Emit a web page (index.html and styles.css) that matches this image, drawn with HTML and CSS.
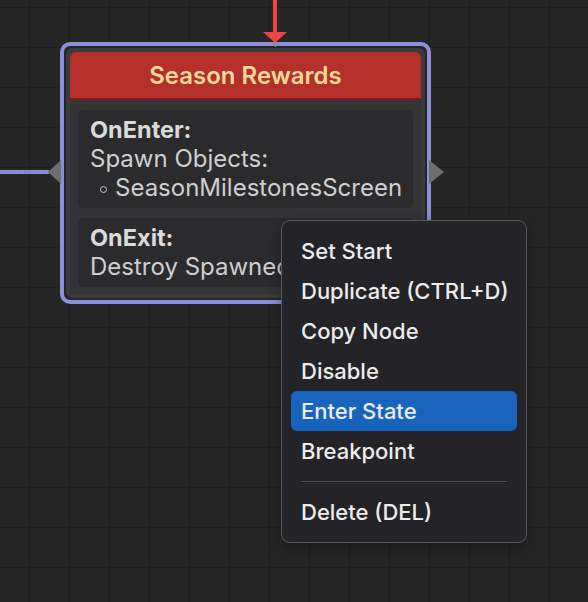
FILE: index.html
```html
<!DOCTYPE html>
<html>
<head>
<meta charset="utf-8">
<link rel="stylesheet" href="styles.css">
</head>
<body>
<div class="canvas">
  <svg class="wires" width="588" height="602" viewBox="0 0 588 602">
    <line x1="0" y1="172" x2="49" y2="172" stroke="#8c8cd4" stroke-width="4"/>
    <line x1="0" y1="172" x2="49" y2="172" stroke="#6c6ca8" stroke-width="1" stroke-dasharray="1 2"/>
    <rect x="273" y="0" width="4" height="33" fill="#ee4444"/>
    <polygon points="263,32 287,32 275,43" fill="#ee4444"/>
  </svg>

  <div class="node">
    <div class="node-frame">
      <div class="node-header">Season Rewards</div>
      <div class="node-body">
        <div class="section">
          <div class="sec-title">OnEnter:</div>
          <div class="sec-line">Spawn Objects:</div>
          <div class="sec-line sec-item"><span class="bullet"></span>SeasonMilestonesScreen</div>
        </div>
        <div class="section">
          <div class="sec-title">OnExit:</div>
          <div class="sec-line">Destroy Spawned Objects</div>
        </div>
      </div>
    </div>
  </div>

  <svg class="ports" width="588" height="602" viewBox="0 0 588 602">
    <polygon points="48,172 61,160 61,184" fill="#6e6e72"/>
    <polygon points="444,172 429,160 429,184" fill="#6e6e72"/>
    <polygon points="270,42 281,42 275.5,47" fill="#8e8e94"/>
  </svg>

  <div class="menu">
    <div class="menu-item">Set Start</div>
    <div class="menu-item">Duplicate (CTRL+D)</div>
    <div class="menu-item">Copy Node</div>
    <div class="menu-item">Disable</div>
    <div class="menu-item active">Enter State</div>
    <div class="menu-item">Breakpoint</div>
    <div class="menu-sep"></div>
    <div class="menu-item">Delete (DEL)</div>
  </div>
</div>
</body>
</html>
```

FILE: styles.css
```css
html, body {
  margin: 0;
  padding: 0;
  background: #262626;
}

.canvas {
  position: relative;
  width: 588px;
  height: 602px;
  overflow: hidden;
  background-color: #262626;
  background-image:
    linear-gradient(to right, #1f1f1f 0, #1f1f1f 1px, transparent 1px),
    linear-gradient(to bottom, #1f1f1f 0, #1f1f1f 1px, transparent 1px);
  background-size: 40px 40px;
  background-position: 29px 7px;
  font-family: Inter, "Noto Sans", sans-serif;
}

.wires, .ports {
  position: absolute;
  left: 0;
  top: 0;
}

.ports {
  z-index: 2;
}

.node {
  position: absolute;
  left: 60px;
  top: 42px;
  width: 371px;
  height: 262px;
  box-sizing: border-box;
  border: 4px solid #8e8ed6;
  border-radius: 10px;
  background: #262628;
  padding: 2px;
  z-index: 1;
}

.node-frame {
  box-sizing: border-box;
  height: 100%;
  background: #3b3b3e;
  border-radius: 7px;
  padding: 4px;
  display: flex;
  flex-direction: column;
}

.node-header {
  height: 46px;
  flex: none;
  background: #b52f2b;
  border-bottom: 2px solid #801a1a;
  border-radius: 6px 6px 0 0;
  color: #f2d89c;
  font-size: 24px;
  font-weight: 600;
  display: flex;
  align-items: center;
  justify-content: center;
}

.node-body {
  flex: 1;
  background: #343437;
  padding: 10px 8px 0 8px;
  display: flex;
  flex-direction: column;
  gap: 10px;
}

.section {
  background: #2b2b2d;
  border-radius: 5px;
  padding: 5px 12px 6px 12px;
  overflow: hidden;
  white-space: nowrap;
}

.sec-title {
  color: #dadada;
  font-size: 23.5px;
  font-weight: 700;
  line-height: 29px;
}

.sec-line {
  color: #cfcfcf;
  font-size: 24px;
  line-height: 29px;
}

.sec-item {
  display: flex;
  align-items: center;
  padding-left: 10px;
}

.bullet {
  width: 5px;
  height: 5px;
  flex: none;
  border: 1.5px solid #cfcfcf;
  border-radius: 50%;
  margin-right: 8px;
  margin-top: 3px;
}

.menu {
  position: absolute;
  left: 281px;
  top: 220px;
  width: 246px;
  box-sizing: border-box;
  background: #242428;
  border: 1px solid #5a5a5e;
  border-radius: 9px;
  padding: 10px 9px 10px 9px;
  z-index: 3;
  box-shadow: 0 4px 14px rgba(0,0,0,0.35);
}

.menu-item {
  height: 40px;
  display: flex;
  align-items: center;
  padding-left: 10px;
  color: #ececec;
  font-size: 22px;
  font-weight: 500;
  border-radius: 6px;
  white-space: nowrap;
}

.menu-item.active {
  background: #1864bd;
}

.menu-sep {
  height: 1px;
  background: #4e4e52;
  margin: 10px 10px 10px 10px;
}
```
